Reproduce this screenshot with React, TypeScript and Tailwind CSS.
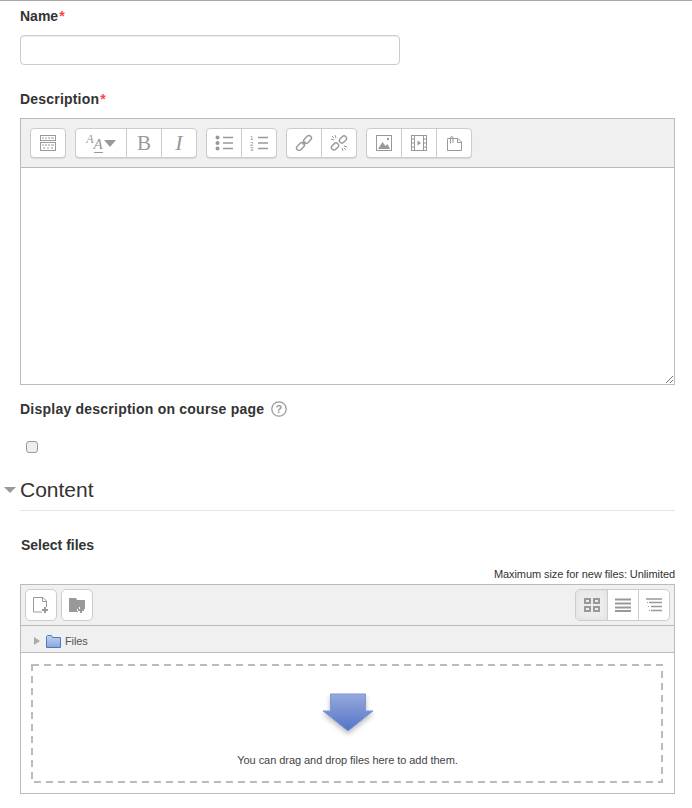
import type { ReactNode } from 'react'

const G = '#999'

function Ico({ children, w = 24, h = 20 }: { children: ReactNode; w?: number; h?: number }) {
  return (
    <svg width={w} height={h} viewBox={`0 0 ${w} ${h}`} fill="none">
      {children}
    </svg>
  )
}

function Btn({ children, first, last, w }: { children: ReactNode; first?: boolean; last?: boolean; w?: string }) {
  const width = w ?? (first ? 'w-[34px]' : 'w-[35px]')
  return (
    <div className={`${width} h-full flex items-center justify-center ${first ? 'rounded-l-[4px]' : 'border-l border-[#ccc]'} ${last ? 'rounded-r-[4px]' : ''}`}>
      {children}
    </div>
  )
}

function Group({ children }: { children: ReactNode }) {
  return <div className="flex h-[30px] bg-white border border-[#ccc] rounded-[4px] shadow-[0_1px_1px_rgba(0,0,0,0.1)]">{children}</div>
}

function KeyboardIcon() {
  return (
    <Ico w={16} h={16}>
      <rect x="0.5" y="0.5" width="15" height="5" fill="#fff" stroke={G} />
      <path d="M2 3h2M5 3h2M8 3h2M11 3h3" stroke={G} />
      <rect x="0.5" y="7.5" width="15" height="8" fill="#fff" stroke={G} />
      <path d="M2 10h2M5 10h2M8 10h2M11 10h3M3 13h2M7 13h2M11 13h2" stroke={G} />
    </Ico>
  )
}

function LinkIcon({ broken }: { broken?: boolean }) {
  return (
    <Ico w={18} h={18}>
      {broken ? (
        <>
          <rect x="1" y="10" width="8" height="5" rx="2.500" stroke={G} strokeWidth="1.400" transform="rotate(-45 5 12.500)" />
          <rect x="9" y="3" width="8" height="5" rx="2.500" stroke={G} strokeWidth="1.400" transform="rotate(-45 13 5.500)" />
          <path d="M5 1l1 3M1 5l3 1M13 17l-1-3M17 13l-3-1M2 2l2 2M14 14l2 2" stroke={G} />
        </>
      ) : (
        <>
          <rect x="1" y="10" width="9" height="5" rx="2.500" stroke={G} strokeWidth="1.400" transform="rotate(-45 5.500 12.500)" />
          <rect x="8" y="3" width="9" height="5" rx="2.500" stroke={G} strokeWidth="1.400" transform="rotate(-45 12.500 5.500)" />
          <path d="m7.500 10.500 3-3" stroke={G} strokeWidth="1.400" />
        </>
      )}
    </Ico>
  )
}

function ListIcon({ ordered }: { ordered?: boolean }) {
  return (
    <Ico w={18} h={16}>
      {ordered ? (
        <text x="0" y="5" fontSize="6" fill="#888" fontFamily="Liberation Sans">
          1
          <tspan x="0" y="10.500">2</tspan>
          <tspan x="0" y="16">3</tspan>
        </text>
      ) : (
        <>
          <circle cx="2.500" cy="2.500" r="2" fill={G} />
          <circle cx="2.500" cy="8" r="2" fill={G} />
          <circle cx="2.500" cy="13.500" r="2" fill={G} />
        </>
      )}
      <path d="M8 2.500h10M8 8h10M8 13.500h10" stroke={G} strokeWidth="1.600" />
    </Ico>
  )
}

function EditorToolbar() {
  return (
    <div className="h-[49px] bg-[#f0f0f0] border-b border-[#bbb] flex items-center gap-[9px] pl-[9px]">
      <Group>
        <Btn first last w="w-[34px]"><KeyboardIcon /></Btn>
      </Group>
      <Group>
        <Btn first w="w-[50px]">
          <span className="flex items-center gap-[1px]">
            <span className="flex h-[20px] font-['Liberation_Serif',serif] italic text-[#999]">
              <span className="self-start text-[12px] leading-[12px]">A</span>
              <span className="self-end text-[15px] leading-[15px] border-b border-[#999]">A</span>
            </span>
            <span className="w-0 h-0 border-x-[6px] border-x-transparent border-t-[7px] border-t-[#999]" />
          </span>
        </Btn>
        <Btn><span className="font-['Liberation_Serif',serif] text-[21px] text-[#999] leading-none">B</span></Btn>
        <Btn last><span className="font-['Liberation_Serif',serif] italic text-[22px] text-[#999] leading-none">I</span></Btn>
      </Group>
      <Group>
        <Btn first><ListIcon /></Btn>
        <Btn last><ListIcon ordered /></Btn>
      </Group>
      <Group>
        <Btn first><LinkIcon /></Btn>
        <Btn last><LinkIcon broken /></Btn>
      </Group>
      <Group>
        <Btn first>
          <Ico w={16} h={16}>
            <rect x="0.500" y="0.500" width="15" height="15" stroke={G} />
            <path d="M2 14 6.500 7l3 4 2-2L14 14z" fill={G} />
            <circle cx="12" cy="4" r="1.200" fill={G} />
          </Ico>
        </Btn>
        <Btn>
          <Ico w={16} h={16}>
            <rect x="0.500" y="0.500" width="15" height="15" stroke={G} />
            <path d="M3.500 1v14M12.500 1v14M1 4h2.500M1 8h2.500M1 12h2.500M12.500 4H15M12.500 8H15M12.500 12H15" stroke={G} />
            <path d="m6.500 5.500 3.500 2.500-3.500 2.500z" fill={G} />
          </Ico>
        </Btn>
        <Btn last>
          <Ico w={15} h={15}>
            <path d="M.5 3.500V14.500H14.500V6L11 2.500H.5z" stroke={G} />
            <path d="M3.500 7.500V1.800a1.200 1.200 0 0 1 2.500 0V7" stroke={G} />
            <path d="M10.500 2.500V6.500H14.500" stroke={G} />
          </Ico>
        </Btn>
      </Group>
    </div>
  )
}

function FileToolbar() {
  const iconBtn = 'w-[32px] h-[32px] bg-white border border-[#ccc] rounded-[5px] flex items-center justify-center'
  return (
    <div className="h-[41px] bg-[#f0f0f0] border-b border-[#bbb] flex items-center justify-between px-[4px]">
      <div className="flex gap-[4px]">
        <div className={iconBtn}>
          <Ico w={16} h={16}>
            <path d="M9 15H.5V.5H10L13.500 4v6" stroke={G} />
            <path d="M9.500.5V4.500H13.500" stroke={G} />
            <path d="M9 13h6M12 10v6" stroke={G} strokeWidth="2" />
          </Ico>
        </div>
        <div className={iconBtn}>
          <Ico w={16} h={16}>
            <path d="M0 1h7l1 2h8v9h-4v-2h-2v2H8v2h1v1H0z" fill={G} />
            <path d="M9 13h6M12 10v6" stroke={G} strokeWidth="2" />
          </Ico>
        </div>
      </div>
      <div className="flex h-[32px] bg-white border border-[#ccc] rounded-[5px]">
        <div className="w-[31px] flex items-center justify-center bg-[#ececec] rounded-l-[4px] shadow-[inset_0_0_6px_rgba(0,0,0,0.06)]">
          <Ico w={16} h={14}>
            <path d="M1 1h5v4H1zM10 1h5v4h-5zM1 9h5v4H1zM10 9h5v4h-5z" stroke={G} strokeWidth="2" />
          </Ico>
        </div>
        <div className="w-[31px] flex items-center justify-center border-l border-[#ccc]">
          <Ico w={16} h={14}>
            <path d="M0 1.500h16M0 5.500h16M0 9.500h16M0 13h16" stroke={G} strokeWidth="2" />
          </Ico>
        </div>
        <div className="w-[31px] flex items-center justify-center border-l border-[#ccc]">
          <Ico w={16} h={14}>
            <path d="M0 1h16M3 4.500h13M5 8.500h11M5 12.500h11" stroke={G} strokeWidth="1.500" />
            <path d="M1 4.500h1M2 8.500h1M3 12.500h1" stroke={G} />
          </Ico>
        </div>
      </div>
    </div>
  )
}

function FolderIcon() {
  return (
    <svg width="15" height="13" viewBox="0 0 15 13">
      <defs>
        <linearGradient id="fold" x1="0" y1="0" x2="0" y2="1">
          <stop offset="0" stopColor="#c3d3ef" />
          <stop offset="1" stopColor="#86a5de" />
        </linearGradient>
      </defs>
      <path d="M.5 12.500V1.500L1.500.5h4l1 2h8v10z" fill="url(#fold)" stroke="#4f78bd" />
    </svg>
  )
}

function DropArrow() {
  return (
    <svg width="60" height="50" viewBox="0 0 60 50">
      <defs>
        <linearGradient id="arr" x1="0" y1="0" x2="0" y2="1">
          <stop offset="0" stopColor="#95a9dc" />
          <stop offset="1" stopColor="#5473c6" />
        </linearGradient>
        <filter id="sh" x="-20%" y="-20%" width="140%" height="150%">
          <feDropShadow dx="0" dy="3" stdDeviation="2.500" floodColor="#000" floodOpacity="0.25" />
        </filter>
      </defs>
      <path d="M12.500 1h35v17H55L30 38 5 18h7.500z" fill="url(#arr)" stroke="#7f97d6" filter="url(#sh)" />
    </svg>
  )
}

export default function App() {
  return (
    <div className="w-[692px] h-[808px] bg-white border-t border-[#aaa] overflow-hidden font-['Liberation_Sans',Arial,sans-serif] text-[#333]">
      <div className="pl-[20px] pr-[17px]">
        <label className="block mt-[5px] h-[20px] text-[14px] leading-[20px] font-bold">
          Name<span className="ml-[1px] text-[#f44]">*</span>
        </label>
        <input type="text" className="block mt-[9px] w-[380px] h-[30px] bg-white border border-[#ccc] rounded-[4px] shadow-[inset_0_1px_1px_rgba(0,0,0,0.075)]" />

        <label className="block mt-[24px] h-[20px] text-[14px] leading-[20px] font-bold tracking-[0.2px]">
          Description<span className="ml-[1px] text-[#f44]">*</span>
        </label>
        <div className="mt-[9px] h-[267px] border border-[#bbb] relative">
          <EditorToolbar />
          <svg className="absolute right-0 bottom-0" width="10" height="10" viewBox="0 0 10 10">
            <path d="M9 2 2 9M9 6 6 9" stroke="#777" />
          </svg>
        </div>

        <div className="mt-[14px] h-[20px] flex items-center text-[14px] font-bold tracking-[0.23px]">
          Display description on course page
          <svg className="ml-[7px]" width="16" height="16" viewBox="0 0 16 16">
            <circle cx="8" cy="8" r="7.200" fill="none" stroke="#999" strokeWidth="1.300" />
            <text x="8" y="12" textAnchor="middle" fontSize="11" fontWeight="700" fill="#999" fontFamily="Liberation Sans">?</text>
          </svg>
        </div>
        <div className="mt-[22px] ml-[6px] w-[12px] h-[12px] rounded-[3px] border border-[#999] bg-[#eee]" />
      </div>

      <div className="mt-[23px] pr-[17px]">
        <div className="flex items-center h-[28px]">
          <span className="ml-[4px] mr-[4px] w-0 h-0 border-x-[6px] border-x-transparent border-t-[6px] border-t-[#999]" />
          <span className="text-[21px] leading-[28px] font-normal">Content</span>
        </div>
        <div className="ml-[20px] mt-[6px] border-b border-[#e5e5e5]" />
      </div>

      <div className="pl-[20px] pr-[17px]">
        <div className="mt-[24px] ml-[1px] h-[20px] text-[14px] leading-[20px] font-bold">Select files</div>
        <div className="mt-[9px] h-[20px] text-right text-[11px] leading-[20px] tracking-[-0.08px] text-[#333]">Maximum size for new files: Unlimited</div>
        <div className="h-[210px] border border-[#bbb]">
          <FileToolbar />
          <div className="h-[27px] pt-[4px] bg-[#f0f0f0] border-b border-[#bbb] flex items-center pl-[13px] text-[11px] tracking-[-0.1px] text-[#555]">
            <span className="w-0 h-0 border-y-[4px] border-y-transparent border-l-[6px] border-l-[#aaa]" />
            <span className="ml-[6px] mr-[4px] flex"><FolderIcon /></span>
            Files
          </div>
          <div className="relative mt-[11px] mx-[10px] h-[119px] flex flex-col items-center">
            <svg className="absolute inset-0" width="632" height="119" fill="none">
              <rect x="1" y="1" width="630" height="117" stroke="#bbb" strokeWidth="2" strokeDasharray="7 5" />
            </svg>
            <div className="mt-[29px] flex"><DropArrow /></div>
            <div className="mt-[9px] text-[11px] leading-[16px] tracking-[-0.05px] text-[#444]">You can drag and drop files here to add them.</div>
          </div>
        </div>
      </div>
    </div>
  )
}
